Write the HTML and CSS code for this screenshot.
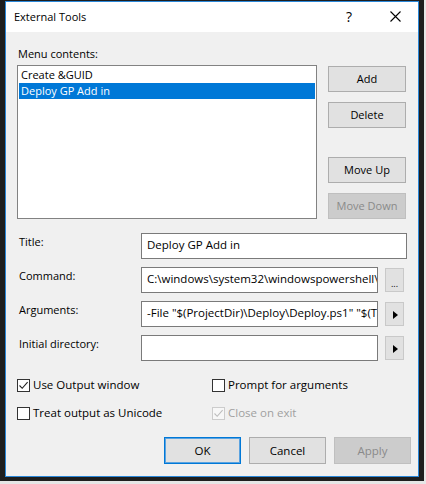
FILE: index.html
```html
<!DOCTYPE html>
<html>
<head>
<meta charset="utf-8">
<link rel="stylesheet" href="styles.css">
</head>
<body>
<div class="screen">
  <div class="dialog">
    <div class="titlebar">
      <span class="title">External Tools</span>
      <span class="tb-btn help">?</span>
      <span class="tb-btn close">
        <svg width="11" height="11" viewBox="0 0 11 11"><path d="M0.5 0.5 L10.5 10.5 M10.5 0.5 L0.5 10.5" stroke="#000" stroke-width="1.1" fill="none"/></svg>
      </span>
    </div>
    <div class="content">
      <div class="menu-label">Menu contents:</div>
      <div class="top">
        <div class="listbox">
          <div class="item">Create &amp;GUID</div>
          <div class="item selected">Deploy GP Add in</div>
        </div>
        <div class="side">
          <div class="btn">Add</div>
          <div class="btn">Delete</div>
          <div class="btn gap">Move Up</div>
          <div class="btn disabled">Move Down</div>
        </div>
      </div>
      <div class="fields">
        <div class="label">Title:</div>
        <div class="input wide">Deploy GP Add in</div>

        <div class="label">Command:</div>
        <div class="input">C:\windows\system32\windowspowershell\v1.0\powershell.exe</div>
        <div class="mini"><span class="dots">...</span></div>

        <div class="label">Arguments:</div>
        <div class="input">-File "$(ProjectDir)\Deploy\Deploy.ps1" "$(TargetDir)"</div>
        <div class="mini"><span class="arrow"></span></div>

        <div class="label">Initial directory:</div>
        <div class="input"></div>
        <div class="mini"><span class="arrow"></span></div>
      </div>
      <div class="checks">
        <label class="check"><span class="box checked"><svg width="11" height="11" viewBox="0 0 11 11"><path d="M1.5 5.5 L4.2 8.3 L9.6 2.2" stroke="#222" stroke-width="1.1" fill="none"/></svg></span>Use Output window</label>
        <label class="check"><span class="box"></span>Prompt for arguments</label>
        <label class="check"><span class="box"></span>Treat output as Unicode</label>
        <label class="check disabled"><span class="box checked"><svg width="11" height="11" viewBox="0 0 11 11"><path d="M1.5 5.5 L4.2 8.3 L9.6 2.2" stroke="#bdbdbd" stroke-width="1.1" fill="none"/></svg></span>Close on exit</label>
      </div>
      <div class="actions">
        <div class="btn action default">OK</div>
        <div class="btn action">Cancel</div>
        <div class="btn action disabled">Apply</div>
      </div>
    </div>
  </div>
</div>
</body>
</html>
```

FILE: styles.css
```css
html, body {
  margin: 0;
  padding: 0;
}
body {
  background: #e6e6e6;
  font-family: "Open Sans", "Noto Sans", sans-serif;
  font-size: 11px;
  color: #000;
  width: 426px;
  height: 484px;
  overflow: hidden;
}
.screen {
  width: 424px;
  height: 481px;
  background: #1e1e1e;
  padding: 1px 0 0 5px;
  box-sizing: border-box;
}
.dialog {
  width: 414px;
  height: 476px;
  box-sizing: border-box;
  border: 1px solid #2a87d8;
  background: #f0f0f0;
  display: flex;
  flex-direction: column;
}
.titlebar {
  height: 30px;
  background: #fff;
  display: flex;
  align-items: center;
  flex: none;
}
.title {
  flex: 1;
  padding-left: 8px;
  line-height: 16px;
  margin-top: -1px;
}
.tb-btn {
  width: 46px;
  height: 30px;
  display: flex;
  align-items: center;
  justify-content: center;
}
.help {
  font-size: 14px;
  margin-top: -2px;
}
.close svg {
  display: block;
  margin-top: -2px;
}
.content {
  flex: 1;
  padding: 14px 11px 0 11px;
  display: flex;
  flex-direction: column;
}
.menu-label {
  line-height: 16px;
  padding-left: 1px;
}
.top {
  display: flex;
  margin-top: 3px;
}
.listbox {
  width: 300px;
  height: 154px;
  box-sizing: border-box;
  border: 1px solid #828282;
  background: #fff;
  padding: 1px;
}
.item {
  height: 16px;
  line-height: 16px;
  padding-left: 2px;
  white-space: nowrap;
}
.item.selected {
  background: #0078d7;
  color: #fff;
}
.side {
  margin-left: 11px;
  padding-top: 1px;
  display: flex;
  flex-direction: column;
  gap: 10px;
}
.btn {
  width: 78px;
  height: 26px;
  box-sizing: border-box;
  border: 1px solid #adadad;
  background: #e1e1e1;
  display: flex;
  align-items: center;
  justify-content: center;
  line-height: 16px;
}
.btn.gap {
  margin-top: 19px;
}
.btn.disabled {
  background: #cccccc;
  border-color: #bfbfbf;
  color: #8a8a8a;
}
.fields {
  margin-top: 14px;
  display: grid;
  grid-template-columns: 124px 237px 29px;
  grid-auto-rows: 26px;
  row-gap: 8px;
}
.label {
  line-height: 16px;
  padding-top: 1px;
  padding-left: 2px;
}
.input {
  box-sizing: border-box;
  border: 1px solid #7a7a7a;
  background: #fff;
  line-height: 16px;
  padding: 3px 0 0 5px;
  white-space: nowrap;
  overflow: hidden;
  font-size: 11.5px;
}
.input.wide {
  grid-column: 2 / 4;
}
.mini {
  margin-left: 7px;
  margin-top: 1px;
  width: 19px;
  height: 24px;
  box-sizing: border-box;
  border: 1px solid #c9c9c9;
  background: #e1e1e1;
  display: flex;
  align-items: center;
  justify-content: center;
}
.dots {
  font-size: 9px;
  line-height: 9px;
  margin-top: 6px;
}
.arrow {
  width: 0;
  height: 0;
  border-top: 4px solid transparent;
  border-bottom: 4px solid transparent;
  border-left: 5px solid #000;
  margin-left: 1px;
  margin-top: 1px;
}
.checks {
  margin-top: 16px;
  display: grid;
  grid-template-columns: 195px 1fr;
  grid-auto-rows: 16px;
  row-gap: 12px;
}
.check {
  display: flex;
  align-items: center;
  gap: 3px;
  line-height: 16px;
  font-size: 11.5px;
}
.box {
  width: 13px;
  height: 13px;
  box-sizing: border-box;
  border: 1px solid #333;
  background: #fff;
  display: flex;
  align-items: center;
  justify-content: center;
  flex: none;
}
.check.disabled {
  color: #a0a0a0;
}
.check.disabled .box {
  border-color: #cccccc;
  background: #f7f7f7;
}
.box svg {
  display: block;
}
.actions {
  margin-top: 16px;
  margin-right: -4px;
  display: flex;
  justify-content: flex-end;
  gap: 8px;
}
.btn.action {
  width: 77px;
  height: 27px;
  font-size: 11.5px;
}
.btn.default {
  border-color: #0078d7;
  box-shadow: inset 0 0 0 1px #5ba3e0;
}
```
